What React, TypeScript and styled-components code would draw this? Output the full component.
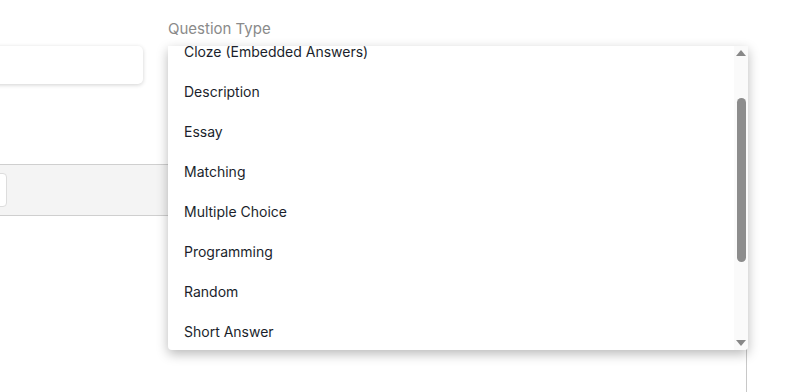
import React from 'react'
import styled, { createGlobalStyle } from 'styled-components'

const questionTypes = [
    'Cloze (Embedded Answers)',
    'Description',
    'Essay',
    'Matching',
    'Multiple Choice',
    'Programming',
    'Random',
    'Short Answer',
]

export default function App() {
    return (
        <>
            <GlobalStyle />
            <Viewport>
                <Page>
                    <FieldsRow>
                        <Field>
                            <Input />
                        </Field>
                        <Field $grow>
                            <Label>Question Type</Label>
                            <SelectWrap>
                                <Select />
                                <Menu>
                                    <Options>
                                        <OptionList>
                                            {questionTypes.map(type => (
                                                <Option key={type}>{type}</Option>
                                            ))}
                                        </OptionList>
                                    </Options>
                                    <ScrollTrack>
                                        <Arrow $dir="up" />
                                        <Thumb />
                                        <Arrow $dir="down" />
                                    </ScrollTrack>
                                </Menu>
                            </SelectWrap>
                        </Field>
                    </FieldsRow>
                    <Editor>
                        <Toolbar>
                            <ToolButton />
                        </Toolbar>
                        <EditorBody />
                    </Editor>
                </Page>
            </Viewport>
        </>
    )
}

const GlobalStyle = createGlobalStyle`
    body {
        margin: 0;
        background: #fff;
        font-family: Inter, 'Open Sans', sans-serif;
        color: #1e2230;
    }
`

const Viewport = styled.div`
    width: 793px;
    height: 392px;
    overflow: hidden;
`

const Page = styled.div`
    width: 853px;
    margin-left: -60px;
    padding-top: 18px;
`

const FieldsRow = styled.div`
    display: flex;
    gap: 25px;
    width: 808px;
`

const Field = styled.div<{ $grow?: boolean }>`
    display: flex;
    flex-direction: column;
    justify-content: flex-end;
    width: ${props => (props.$grow ? '580px' : '203px')};
`

const Label = styled.div`
    font-size: 15px;
    color: #8a8a8a;
    height: 28px;
    line-height: 22px;
`

const Input = styled.div`
    height: 38px;
    background: #fff;
    border-radius: 5px;
    box-shadow: 0 1px 4px rgba(0, 0, 0, 0.18);
`

const SelectWrap = styled.div`
    position: relative;
`

const Select = styled.div`
    height: 38px;
    border: 1px solid #ddd;
    border-radius: 5px;
    box-sizing: border-box;
`

const Menu = styled.div`
    position: absolute;
    top: 0;
    left: 0;
    right: 0;
    height: 304px;
    display: flex;
    background: #fff;
    border-radius: 0 0 4px 4px;
    box-shadow: 0 4px 12px rgba(0, 0, 0, 0.28);
    overflow: hidden;
    z-index: 2;
`

const Options = styled.div`
    flex: 1;
    overflow: hidden;
`

const OptionList = styled.ul`
    list-style: none;
    margin: -14px 0 0;
    padding: 0;
`

const Option = styled.li`
    height: 40px;
    line-height: 40px;
    padding-left: 16px;
    font-size: 14px;
    color: #1b1f2c;
`

const ScrollTrack = styled.div`
    width: 14px;
    background: #fafafa;
    display: flex;
    flex-direction: column;
    align-items: center;
    padding: 4px 0;
    box-sizing: border-box;
`

const Arrow = styled.div<{ $dir: 'up' | 'down' }>`
    width: 0;
    height: 0;
    border-left: 5px solid transparent;
    border-right: 5px solid transparent;
    ${props =>
        props.$dir === 'up'
            ? 'border-bottom: 6px solid #888;'
            : 'border-top: 6px solid #888; margin-top: auto;'}
`

const Thumb = styled.div`
    width: 9px;
    height: 164px;
    margin-top: 42px;
    background: #8c8c8c;
    border-radius: 5px;
`

const Editor = styled.div`
    margin-top: 80px;
    width: 806px;
    border-right: 1px solid #c8c8c8;
`

const Toolbar = styled.div`
    height: 50px;
    background: #f4f4f4;
    border-top: 1px solid #cfcfcf;
    border-bottom: 1px solid #cfcfcf;
    display: flex;
    align-items: center;
    padding-left: 20px;
`

const ToolButton = styled.div`
    width: 47px;
    height: 34px;
    background: #fff;
    border: 1px solid #ddd;
    border-radius: 4px;
    box-sizing: border-box;
`

const EditorBody = styled.div`
    height: 200px;
`
